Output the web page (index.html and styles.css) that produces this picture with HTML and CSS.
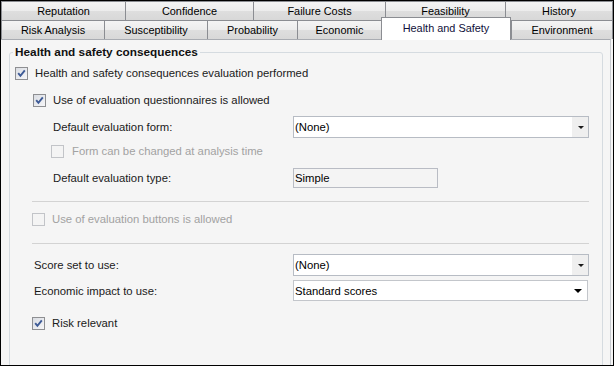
FILE: index.html
```html
<!DOCTYPE html>
<html lang="en">
<head>
  <meta charset="UTF-8">
  <title>Health and Safety</title>
  <link rel="stylesheet" href="styles.css">
</head>
<body>
  <div class="window">
    <div class="tab-row top">
      <div class="tab">Reputation</div>
      <div class="tab">Confidence</div>
      <div class="tab">Failure Costs</div>
      <div class="tab">Feasibility</div>
      <div class="tab">History</div>
    </div>
    <div class="tab-row bottom">
      <div class="tab">Risk Analysis</div>
      <div class="tab">Susceptibility</div>
      <div class="tab">Probability</div>
      <div class="tab">Economic</div>
      <div class="tab active">Health and Safety</div>
      <div class="tab">Environment</div>
    </div>

    <div class="panel">
      <fieldset class="group">
        <legend>Health and safety consequences</legend>

        <div class="row row-a">
          <span class="cb">
            <svg width="13" height="13" viewBox="0 0 13 13"><path d="M3.2 6.2 L5.4 8.8 L9.8 3.4" fill="none" stroke="#3d5a96" stroke-width="1.9"/></svg>
          </span>
          <span class="cb-text">Health and safety consequences evaluation performed</span>
        </div>

        <div class="row row-b">
          <span class="cb">
            <svg width="13" height="13" viewBox="0 0 13 13"><path d="M3.2 6.2 L5.4 8.8 L9.8 3.4" fill="none" stroke="#3d5a96" stroke-width="1.9"/></svg>
          </span>
          <span class="cb-text">Use of evaluation questionnaires is allowed</span>
        </div>

        <div class="field row-c">
          <span class="label deep">Default evaluation form:</span>
          <div class="select">
            <span>(None)</span>
            <span class="drop"><span class="arrow"></span></span>
          </div>
        </div>

        <div class="row row-d disabled">
          <span class="cb"></span>
          <span class="cb-text">Form can be changed at analysis time</span>
        </div>

        <div class="field row-e">
          <span class="label deep">Default evaluation type:</span>
          <div class="textbox">Simple</div>
        </div>

        <div class="sep sep-1"></div>

        <div class="row row-f disabled">
          <span class="cb"></span>
          <span class="cb-text">Use of evaluation buttons is allowed</span>
        </div>

        <div class="sep sep-2"></div>

        <div class="field row-g">
          <span class="label">Score set to use:</span>
          <div class="select">
            <span>(None)</span>
            <span class="drop"><span class="arrow"></span></span>
          </div>
        </div>

        <div class="field row-h">
          <span class="label">Economic impact to use:</span>
          <div class="select plain">
            <span>Standard scores</span>
            <span class="drop"><span class="arrow big"></span></span>
          </div>
        </div>

        <div class="row row-i">
          <span class="cb">
            <svg width="13" height="13" viewBox="0 0 13 13"><path d="M3.2 6.2 L5.4 8.8 L9.8 3.4" fill="none" stroke="#3d5a96" stroke-width="1.9"/></svg>
          </span>
          <span class="cb-text">Risk relevant</span>
        </div>
      </fieldset>
    </div>
  </div>
</body>
</html>
```

FILE: styles.css
```css
* {
  margin: 0;
  padding: 0;
  box-sizing: border-box;
}
body {
  font-family: 'Liberation Sans', Arial, sans-serif;
  font-size: 11.3px;
  line-height: 14px;
  color: #1c1c1c;
  background: #f5f5f5;
}
.window {
  width: 614px;
  height: 366px;
  border: 1px solid #000;
  background: #f5f5f5;
  overflow: hidden;
}

/* tabs */
.tab-row {
  display: flex;
  height: 19px;
  align-items: flex-start;
}
.tab {
  height: 19px;
  border-top: 1px solid #8b8d92;
  border-left: 1px solid #8b8d92;
  background: linear-gradient(#f4f4f4, #ececec 50%, #dedede 52%, #d8d8d8);
  font-size: 10.9px;
  line-height: 17px;
  padding-top: 1px;
  text-align: center;
  color: #000;
}
.tab:last-child {
  border-right: 1px solid #8b8d92;
}
.top .tab:nth-child(1) { width: 124px; }
.top .tab:nth-child(2) { width: 128px; }
.top .tab:nth-child(3) { width: 132px; }
.top .tab:nth-child(4) { width: 120px; }
.top .tab:nth-child(5) { width: 108px; }
.bottom .tab:nth-child(1) { width: 103px; }
.bottom .tab:nth-child(2) { width: 103px; }
.bottom .tab:nth-child(3) { width: 90px; }
.bottom .tab:nth-child(4) { width: 84px; }
.bottom .tab:nth-child(5) { width: 130px; }
.bottom .tab:nth-child(6) { width: 102px; }
.tab.active {
  position: relative;
  z-index: 1;
  margin-top: -3px;
  height: 23px;
  background: #fff;
  border-right: 1px solid #8b8d92;
  line-height: 18px;
  color: #10103a;
}

/* panel */
.panel {
  height: 327px;
  margin-right: 2px;
  border-top: 1px solid #a9acb2;
  border-right: 1px solid #c9ccd1;
  padding-top: 5px;
}
.group {
  height: 340px;
  margin: 0 7px 0 8px;
  border: 1px solid #d5dbe0;
  border-radius: 3px;
  padding: 0 5px;
}
.group legend {
  margin-left: -2px;
  padding: 0 2px;
  font-weight: bold;
  font-size: 11.8px;
  line-height: 14px;
  color: #111;
}

.row {
  display: flex;
  align-items: center;
  height: 18px;
}
.cb {
  width: 13px;
  height: 13px;
  flex: none;
  border: 1px solid #8e8f92;
  background: linear-gradient(135deg, #dadde3, #f6f6f8);
  display: flex;
}
.cb svg {
  margin: -1px;
}
.cb-text {
  margin-left: 7px;
  color: #202020;
}
.disabled .cb {
  border-color: #c2c4c8;
  background: #f4f4f4;
}
.disabled .cb-text {
  color: #a2a2a2;
}

.row-a { margin-top: 5px; }
.row-b { margin-top: 9px; padding-left: 18px; }
.row-c { margin-top: 7px; }
.row-d { margin-top: 4px; padding-left: 36px; }
.row-d .cb-text { margin-left: 8px; }
.row-e { margin-top: 8px; }
.row-f { margin-top: 8px; padding-left: 17px; }
.row-g { margin-top: 10px; }
.row-h { margin-top: 4px; }
.row-i { margin-top: 13px; padding-left: 17px; }

.sep {
  height: 1px;
  width: 557px;
  margin-left: 17px;
  background: #d3d3d3;
}
.sep-1 { margin-top: 13px; }
.sep-2 { margin-top: 15px; }

.field {
  display: grid;
  grid-template-columns: 278px 296px;
  align-items: center;
}
.label {
  padding-left: 19px;
  color: #1a1a1a;
}
.label.deep {
  padding-left: 38px;
}
.select {
  height: 22px;
  display: flex;
  align-items: center;
  border: 1px solid #b7bcc4;
  background: #fff;
  padding-left: 1px;
  color: #000;
}
.select > span:first-child {
  flex: 1;
}
.drop {
  width: 16px;
  height: 20px;
  background: #efefef;
  display: flex;
  align-items: center;
  justify-content: center;
}
.arrow {
  width: 0;
  height: 0;
  border-left: 3px solid transparent;
  border-right: 3px solid transparent;
  border-top: 3px solid #1a1a1a;
  margin-left: 1px;
}
.select.plain {
  height: 21px;
  width: 295px;
  border-color: #c3c6cb;
}
.select.plain .drop {
  background: #fff;
  height: 19px;
  width: 20px;
}
.arrow.big {
  border-left-width: 4px;
  border-right-width: 4px;
  border-top-width: 4px;
  border-top-color: #000;
}
.textbox {
  width: 145px;
  height: 20px;
  border: 1px solid #b9bcc4;
  background: #f4f4f4;
  padding-left: 1px;
  line-height: 18px;
  color: #000;
}
```
